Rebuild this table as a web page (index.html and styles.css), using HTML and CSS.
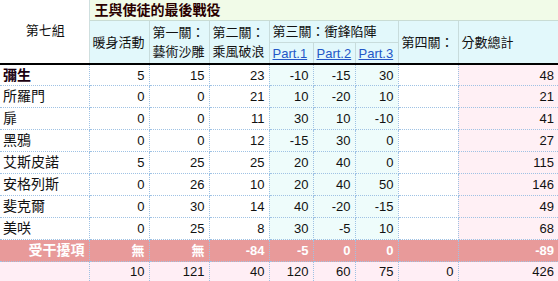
FILE: index.html
```html
<!DOCTYPE html>
<html lang="zh-Hant">
<head>
<meta charset="utf-8">
<link rel="stylesheet" href="styles.css">
</head>
<body>
<table class="score">
  <colgroup>
    <col class="c-name"><col class="c-std"><col class="c-std"><col class="c-std">
    <col class="c-p1"><col class="c-p2"><col class="c-p3"><col class="c-std"><col class="c-total">
  </colgroup>
  <thead>
    <tr class="h-title">
      <th class="group" rowspan="3">第七組</th>
      <th class="title" colspan="8">王與使徒的最後戰役</th>
    </tr>
    <tr class="h-stage">
      <th class="hs" rowspan="2">暖身活動</th>
      <th class="hs" rowspan="2">第一關：<br>藝術沙雕</th>
      <th class="hs" rowspan="2">第二關：<br>乘風破浪</th>
      <th class="hs" colspan="3">第三關：衝鋒陷陣</th>
      <th class="hs" rowspan="2">第四關：</th>
      <th class="hs total-h" rowspan="2">分數總計</th>
    </tr>
    <tr class="h-part">
      <th class="hs part"><a href="#">Part.1</a></th>
      <th class="hs part"><a href="#">Part.2</a></th>
      <th class="hs part"><a href="#">Part.3</a></th>
    </tr>
  </thead>
  <tbody>
    <tr class="first"><td class="name bold">彌生</td><td>5</td><td>15</td><td>23</td><td class="p">-10</td><td class="p">-15</td><td class="p">30</td><td></td><td class="t">48</td></tr>
    <tr><td class="name">所羅門</td><td>0</td><td>0</td><td>21</td><td class="p">10</td><td class="p">-20</td><td class="p">10</td><td></td><td class="t">21</td></tr>
    <tr><td class="name">扉</td><td>0</td><td>0</td><td>11</td><td class="p">30</td><td class="p">10</td><td class="p">-10</td><td></td><td class="t">41</td></tr>
    <tr><td class="name">黑鴉</td><td>0</td><td>0</td><td>12</td><td class="p">-15</td><td class="p">30</td><td class="p">0</td><td></td><td class="t">27</td></tr>
    <tr><td class="name">艾斯皮諾</td><td>5</td><td>25</td><td>25</td><td class="p">20</td><td class="p">40</td><td class="p">0</td><td></td><td class="t">115</td></tr>
    <tr><td class="name">安格列斯</td><td>0</td><td>26</td><td>10</td><td class="p">20</td><td class="p">40</td><td class="p">50</td><td></td><td class="t">146</td></tr>
    <tr><td class="name">斐克爾</td><td>0</td><td>30</td><td>14</td><td class="p">40</td><td class="p">-20</td><td class="p">-15</td><td></td><td class="t">49</td></tr>
    <tr><td class="name">美咲</td><td>0</td><td>25</td><td>8</td><td class="p">30</td><td class="p">-5</td><td class="p">10</td><td></td><td class="t">68</td></tr>
    <tr class="penalty"><td>受干擾項</td><td>無</td><td>無</td><td>-84</td><td>-5</td><td>0</td><td>0</td><td></td><td>-89</td></tr>
    <tr class="sum"><td></td><td>10</td><td>121</td><td>40</td><td>120</td><td>60</td><td>75</td><td>0</td><td>426</td></tr>
  </tbody>
</table>
</body>
</html>
```
FILE: styles.css
```css
html, body {
  margin: 0;
  padding: 0;
  background: #ffffff;
}
.score {
  border-collapse: collapse;
  table-layout: fixed;
  width: 558px;
  font-family: "Liberation Sans", "Noto Sans CJK TC", sans-serif;
  font-size: 13px;
  color: #111;
}
.c-name { width: 89px; }
.c-std { width: 60px; }
.c-p1 { width: 44px; }
.c-p2 { width: 42px; }
.c-p3 { width: 43px; }
.c-total { width: 100px; }

th {
  font-weight: normal;
  text-align: left;
  padding: 0 1px 0 3px;
  line-height: 19px;
  white-space: nowrap;
  overflow: visible;
}
.group {
  background: #ffffff;
  text-align: center;
  border-right: 1px solid #cfdfdf;
  border-bottom: 2px solid #000;
  vertical-align: middle;
  padding-bottom: 2px;
}
.title {
  background: #f1fbe8;
  height: 20px;
  line-height: 20px;
  font-weight: bold;
  font-size: 14px;
  color: #2a0000;
  border-bottom: 1px solid #c9dcd4;
  padding-left: 5px;
}
.hs {
  background: #e2f8fb;
  border: 1px solid #c8dcdc;
  border-top: none;
  vertical-align: middle;
}
.h-stage .hs[rowspan="2"] {
  border-bottom: 2px solid #000;
}
.h-stage .hs { height: 21px; }
.part {
  height: 20px;
  line-height: 19px;
  border-bottom: 2px solid #000;
  padding: 0 1px 0 3px;
}
.part a {
  color: #2457c8;
  text-decoration: underline;
}

td {
  height: 21px;
  line-height: 17px;
  padding: 0 4px;
  text-align: right;
  border: 1px dotted #9fc2e4;
  border-top: none;
  border-left: none;
  white-space: nowrap;
}
td:last-child { border-right: none; }
tr.first td { height: 20px; }
td.name {
  text-align: left;
  padding-left: 3px;
  font-size: 14px;
}
td.bold {
  font-weight: bold;
  color: #1a0010;
}
td.p { background: #eefcfb; }
td.t { background: #fff0f5; }
tr.penalty td {
  background: #e89a9a;
  color: #fff;
  font-weight: bold;
}
tr.penalty td:first-child { font-size: 14px; }
tr.sum td {
  background: #ffeef5;
  height: 19px;
  border-bottom: none;
}
```
